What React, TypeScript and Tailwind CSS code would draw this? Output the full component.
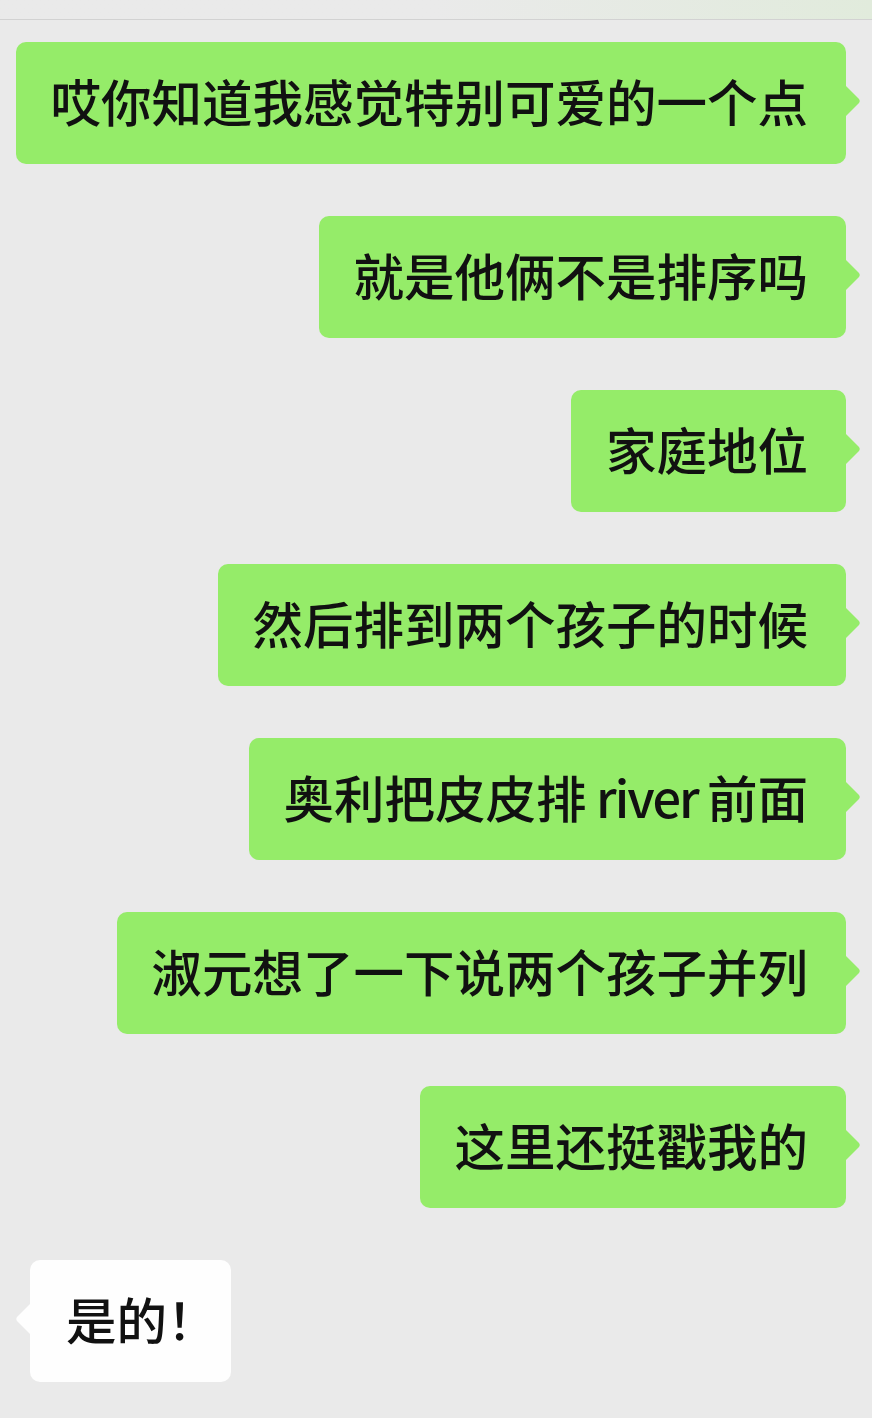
const sent: { id: number; parts: string[] }[] = [
  { id: 1, parts: ["哎你知道我感觉特别可爱的一个点"] },
  { id: 2, parts: ["就是他俩不是排序吗"] },
  { id: 3, parts: ["家庭地位"] },
  { id: 4, parts: ["然后排到两个孩子的时候"] },
  { id: 5, parts: ["奥利把皮皮排", " river ", "前面"] },
  { id: 6, parts: ["淑元想了一下说两个孩子并列"] },
  { id: 7, parts: ["这里还挺戳我的"] },
];

function RightTail() {
  return (
    <svg
      className="absolute -right-[16px] top-[43px]"
      width="17"
      height="32"
      viewBox="0 0 17 32"
    >
      <path d="M0 0 L13.5 13.5 Q16 16 13.5 18.5 L0 32 Z" fill="#95ec69" />
    </svg>
  );
}

function LeftTail() {
  return (
    <svg
      className="absolute -left-[16px] top-[43px]"
      width="17"
      height="32"
      viewBox="0 0 17 32"
    >
      <path d="M17 0 L3.5 13.5 Q1 16 3.5 18.5 L17 32 Z" fill="#fefefe" />
    </svg>
  );
}

export default function App() {
  return (
    <div
      className="w-[872px] h-[1418px] bg-[#eaeaea] text-[#111111] overflow-hidden"
      style={{ fontFamily: '"Noto Sans CJK SC", "Noto Sans", sans-serif' }}
    >
      {/* status strip */}
      <div className="h-[20px] border-b border-[#d2d2d2] bg-gradient-to-r from-[#eaeaea] via-[#eaeaea] to-[#e1ebdc]"></div>

      <div className="flex flex-col gap-[52px] pt-[22px]">
        {sent.map((msg) => (
          <div key={msg.id} className="flex justify-end pr-[26px]">
            <div className="relative flex h-[122px] items-center rounded-[10px] bg-[#95ec69] pl-[35px] pr-[38px] pb-[6px]">
              <span className="whitespace-nowrap text-[50.5px] font-medium leading-none">
                {msg.parts.map((p, i) =>
                  i === 1 ? (
                    <span key={i} className="tracking-[-2px]">
                      {p}
                    </span>
                  ) : (
                    <span key={i}>{p}</span>
                  )
                )}
              </span>
              <RightTail />
            </div>
          </div>
        ))}

        <div className="flex justify-start pl-[30px]">
          <div className="relative flex h-[122px] w-[201px] items-center rounded-[10px] bg-[#fefefe] pl-[36px] pb-[6px]">
            <span className="whitespace-nowrap text-[50.5px] font-medium leading-none">
              是的！
            </span>
            <LeftTail />
          </div>
        </div>
      </div>
    </div>
  );
}
